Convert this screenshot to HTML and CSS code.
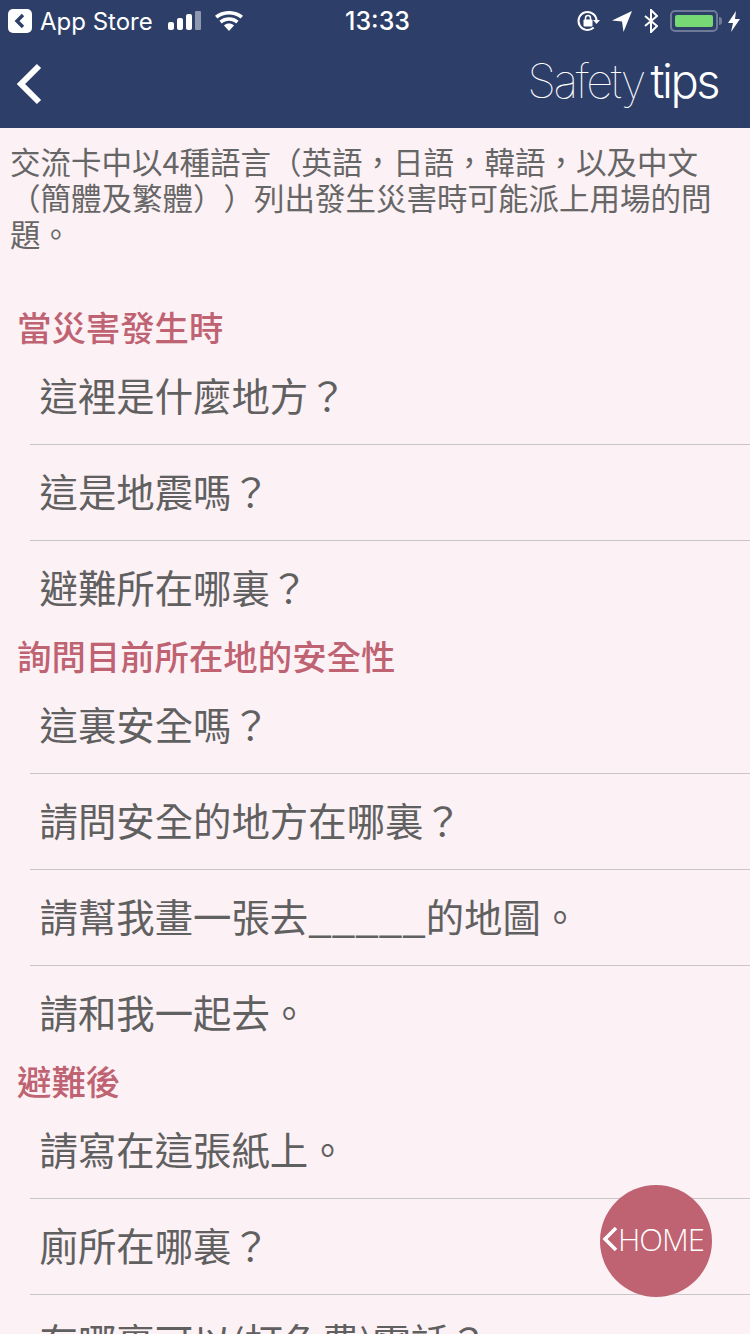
FILE: index.html
```html
<!DOCTYPE html>
<html lang="zh-Hant">

<head>
    <meta charset="UTF-8">
    <meta name="viewport" content="width=device-width, initial-scale=1.0">
    <title>Safety tips</title>
    <link rel="stylesheet" href="styles.css">
</head>

<body>
    <header class="top">
        <div class="status">
            <div class="status-left">
                <svg class="back-app" width="24" height="24" viewBox="0 0 24 24">
                    <rect width="24" height="24" rx="5" fill="#fff" />
                    <path d="M15 6l-6 6 6 6" fill="none" stroke="#2d3e69" stroke-width="3.4" />
                </svg>
                <span class="app-name">App Store</span>
                <svg class="signal" width="33" height="20" viewBox="0 0 33 20">
                    <rect x="0" y="11" width="6" height="8" rx="2" fill="#fff" />
                    <rect x="9" y="7" width="6" height="12" rx="2" fill="#fff" />
                    <rect x="18" y="3" width="6" height="16" rx="2" fill="#fff" />
                    <rect x="27" y="0" width="6" height="19" rx="1" fill="#8d97b0" />
                </svg>
                <svg class="wifi" width="28" height="20" viewBox="0 0 28 20">
                    <path d="M14 20l-5-5.600c2.800-2.400 7.200-2.400 10 0zM6.800 12.400l-2.400-2.700c5.400-4.600 13.800-4.600 19.200 0l-2.400 2.700c-4.100-3.400-10.300-3.400-14.400 0zM2.400 7.400L0 4.700c7.900-6.300 20.100-6.300 28 0l-2.400 2.700c-6.600-5.200-16.600-5.200-23.200 0z" fill="#fff" />
                </svg>
            </div>
            <span class="clock">13:33</span>
            <div class="status-right">
                <svg width="24" height="24" viewBox="0 0 24 24">
                    <path d="M20.500 12a9 9 0 1 0-2.800 6.500" fill="none" stroke="#fff" stroke-width="2" />
                    <path d="M17 11h7l-3.500 4z" fill="#fff" />
                    <rect x="7.500" y="10.500" width="9" height="7" rx="1" fill="#fff" />
                    <path d="M9.500 11V9a2.500 2.500 0 0 1 5 0v2" fill="none" stroke="#fff" stroke-width="1.500" />
                </svg>
                <svg width="20" height="21" viewBox="0 0 20 21">
                    <path d="M20 0L11.500 21 10 10.500 0 9.500z" fill="#fff" />
                </svg>
                <svg width="14" height="24" viewBox="0 0 14 24">
                    <path d="M1 7l12 10-6 6V1l6 6L1 17" fill="none" stroke="#fff" stroke-width="2" />
                </svg>
                <div class="battery"><div class="battery-level"></div></div>
                <svg class="bolt" width="12" height="21" viewBox="0 0 12 21">
                    <path d="M8 0L0 12h5L3 21l9-13H7z" fill="#fff" />
                </svg>
            </div>
        </div>
        <div class="nav">
            <svg class="nav-back" width="26" height="42" viewBox="0 0 26 42">
                <path d="M23 3L5 21l18 18" fill="none" stroke="#fff" stroke-width="6" />
            </svg>
            <h1 class="nav-title"><span class="thin">Safety</span> <span class="light">tips</span></h1>
        </div>
    </header>

    <main>
        <p class="intro">交流卡中以4種語言（英語，日語，韓語，以及中文（簡體及繁體））列出發生災害時可能派上用場的問題。</p>

        <section>
            <h2>當災害發生時</h2>
            <ul>
                <li>這裡是什麼地方？</li>
                <li>這是地震嗎？</li>
                <li>避難所在哪裏？</li>
            </ul>
        </section>

        <section>
            <h2>詢問目前所在地的安全性</h2>
            <ul>
                <li>這裏安全嗎？</li>
                <li>請問安全的地方在哪裏？</li>
                <li>請幫我畫一張去<span class="blank">_____</span>的地圖。</li>
                <li>請和我一起去。</li>
            </ul>
        </section>

        <section>
            <h2>避難後</h2>
            <ul>
                <li>請寫在這張紙上。</li>
                <li>廁所在哪裏？</li>
                <li>有哪裏可以(打免費)電話？</li>
            </ul>
        </section>
    </main>

    <a class="home" href="#">
        <svg width="16" height="26" viewBox="0 0 16 26">
            <path d="M14 2L3 13l11 11" fill="none" stroke="#fff" stroke-width="3.500" />
        </svg>
        <span>HOME</span>
    </a>
</body>

</html>
```

FILE: styles.css
```css
* {
    box-sizing: border-box;
}

html,
body {
    height: 100%;
}

body {
    position: relative;
    margin: 0;
    height: 1334px;
    overflow: hidden;
    background: #fcf1f5;
    color: #666;
    font-family: "Noto Sans CJK TC", "Liberation Sans", sans-serif;
    text-spacing-trim: space-all;
}

.top {
    height: 128px;
    background: #2d3e69;
    color: #fff;
}

.status {
    display: flex;
    align-items: center;
    justify-content: space-between;
    height: 40px;
    padding: 2px 10px 0 8px;
    font-family: Inter, "Liberation Sans", sans-serif;
}

.status-left,
.status-right {
    display: flex;
    align-items: center;
    width: 290px;
}

.status-right {
    justify-content: flex-end;
    gap: 12px;
}

.app-name {
    margin: 0 15px 0 8px;
    font-size: 24px;
}

.wifi {
    margin-left: 14px;
}

.clock {
    margin-left: 7px;
    font-size: 25px;
    font-weight: 500;
}

.battery {
    position: relative;
    width: 48px;
    height: 22px;
    padding: 3px;
    border: 2px solid #6e7a98;
    border-radius: 5px;
    margin-right: -2px;
}

.battery::after {
    content: "";
    position: absolute;
    right: -6px;
    top: 5px;
    width: 3px;
    height: 8px;
    background: #6e7a98;
    border-radius: 0 3px 3px 0;
}

.battery-level {
    height: 100%;
    background: #77d973;
    border-radius: 2px;
}

.nav {
    display: flex;
    align-items: center;
    justify-content: space-between;
    height: 88px;
    padding: 0 32px 0 16px;
}

.nav-title {
    margin: 0 0 8px;
    font-family: Inter, "Liberation Sans", sans-serif;
    font-size: 47px;
    font-weight: 100;
    letter-spacing: -2.500px;
    word-spacing: -4px;
}

.nav-title .light {
    font-weight: 300;
}

.intro {
    margin: 0;
    padding: 15px 10px 0;
    height: 180px;
    font-size: 30.500px;
    line-height: 36px;
}

h2 {
    margin: 0;
    height: 41px;
    padding-left: 17px;
    color: #bf6272;
    font-size: 34.400px;
    font-weight: 500;
    line-height: 37px;
}

ul {
    margin: 0;
    padding: 0 0 0 30px;
    list-style: none;
}

li {
    height: 96px;
    padding-left: 9.500px;
    border-bottom: 1px solid #c8c6c9;
    color: #606060;
    font-size: 38.400px;
    line-height: 91px;
}

li:last-child {
    border-bottom: 0;
}

.blank {
    font-size: 42px;
    line-height: 0;
}

.home {
    position: absolute;
    left: 600px;
    top: 1185px;
    display: flex;
    align-items: center;
    width: 112px;
    height: 112px;
    padding: 0 0 4px 2px;
    border-radius: 50%;
    background: #bf6272;
    color: #fff;
    font-family: "Open Sans", "Liberation Sans", sans-serif;
    font-size: 31px;
    font-weight: 300;
    letter-spacing: -1px;
    text-decoration: none;
}
```
